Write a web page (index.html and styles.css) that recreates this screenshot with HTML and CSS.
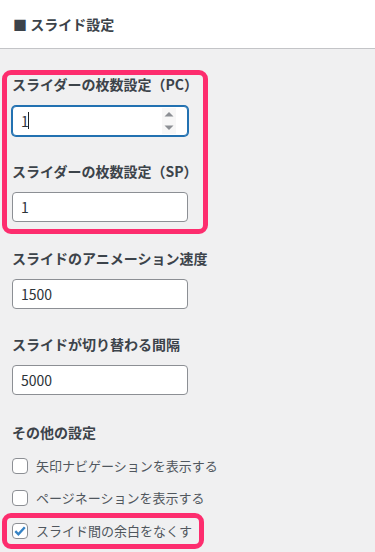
FILE: index.html
```html
<!DOCTYPE html>
<html lang="ja">
<head>
<meta charset="utf-8">
<title>スライド設定</title>
<link rel="stylesheet" href="styles.css">
</head>
<body>
<header class="panel-header">
  <h2 class="panel-title">■ スライド設定</h2>
</header>
<main class="panel-body">
  <div class="highlight highlight-fields">
    <div class="field field-first">
      <label class="field-label">スライダーの枚数設定（PC）</label>
      <div class="input-wrap">
        <input class="text-input is-focused" type="text" value="1" readonly>
        <span class="caret"></span>
        <svg class="spinner" width="14" height="26" viewBox="0 0 14 26" aria-hidden="true">
          <rect x="0" y="0" width="14" height="26" fill="#f7f7f7"/>
          <polygon points="2.5,8.5 7,4 11.5,8.5" fill="#8c8f94"/>
          <polygon points="2.5,17.5 7,22 11.5,17.5" fill="#8c8f94"/>
        </svg>
      </div>
    </div>
    <div class="field">
      <label class="field-label">スライダーの枚数設定（SP）</label>
      <input class="text-input" type="text" value="1" readonly>
    </div>
  </div>

  <div class="field field-after-box">
    <label class="field-label">スライドのアニメーション速度</label>
    <input class="text-input" type="text" value="1500" readonly>
  </div>
  <div class="field">
    <label class="field-label">スライドが切り替わる間隔</label>
    <input class="text-input" type="text" value="5000" readonly>
  </div>

  <div class="field field-other">
    <div class="field-label">その他の設定</div>
  </div>
  <div class="check-list">
    <label class="check-row">
      <span class="checkbox"></span>
      <span class="check-text">矢印ナビゲーションを表示する</span>
    </label>
    <label class="check-row">
      <span class="checkbox"></span>
      <span class="check-text">ページネーションを表示する</span>
    </label>
    <div class="highlight highlight-check">
      <label class="check-row check-row-boxed">
        <span class="checkbox">
          <svg width="14" height="14" viewBox="0 0 14 14" aria-hidden="true">
            <path d="M2.3 7.2 L5.4 10.3 L11.8 3.2" fill="none" stroke="#3582c4" stroke-width="2.4" stroke-linejoin="miter"/>
          </svg>
        </span>
        <span class="check-text">スライド間の余白をなくす</span>
      </label>
    </div>
  </div>
</main>
</body>
</html>
```

FILE: styles.css
```css
* {
  box-sizing: border-box;
}

html, body {
  margin: 0;
  padding: 0;
}

body {
  background: #f0f0f1;
  font-family: "Noto Sans CJK JP", "Noto Sans", sans-serif;
  color: #3c434a;
  width: 375px;
  height: 552px;
  overflow: hidden;
}

.panel-header {
  background: #ffffff;
  height: 49px;
  border-bottom: 1px solid #c3c4c7;
  display: flex;
  align-items: center;
  padding: 0 0 1px 13px;
}

.panel-title {
  margin: 0;
  font-size: 14px;
  font-weight: 700;
  line-height: 18px;
  color: #3c434a;
}

.panel-body {
  padding: 0 0 0 2px;
}

.highlight {
  border: 5px solid #fd2d6e;
  border-radius: 9px;
  padding: 0 5px;
}

.highlight-fields {
  width: 206px;
  margin-top: 21px;
  padding-bottom: 7px;
}

.field {
  display: flex;
  flex-direction: column;
  align-items: flex-start;
  margin-top: 26px;
}

.field-first {
  margin-top: 0;
}

.field-after-box {
  margin-top: 15px;
  padding-left: 10px;
}

.highlight-fields + .field-after-box ~ .field {
  padding-left: 10px;
}

.field-other {
  margin-top: 28px;
}

.field-label {
  font-size: 14px;
  font-weight: 700;
  line-height: 18px;
  color: #3c434a;
  margin-bottom: 12px;
  white-space: nowrap;
}

.field-first .field-label {
  margin-bottom: 13px;
}

.field-other .field-label {
  margin-bottom: 0;
}

.input-wrap {
  position: relative;
  width: 176px;
  height: 30px;
}

.text-input {
  display: block;
  width: 176px;
  height: 30px;
  margin: 0;
  padding: 0 8px;
  border: 1px solid #8c8f94;
  border-radius: 4px;
  background: #ffffff;
  font-family: "Noto Sans CJK JP", "Noto Sans", sans-serif;
  font-size: 14px;
  color: #2c3338;
  outline: none;
}

.text-input.is-focused {
  border-color: #2271b1;
  box-shadow: 0 0 0 1px #2271b1;
}

.caret {
  position: absolute;
  left: 16px;
  top: 6px;
  width: 1px;
  height: 17px;
  background: #1d2327;
}

.spinner {
  position: absolute;
  right: 12px;
  top: 2px;
}

.check-list {
  display: flex;
  flex-direction: column;
  gap: 1px;
  margin-top: 9px;
}

.check-row {
  display: flex;
  align-items: center;
  gap: 8px;
  height: 31px;
  padding-left: 10px;
}

.check-row-boxed {
  height: 26px;
  padding-left: 0;
}

.highlight-check {
  width: 202px;
  margin-top: -1px;
}

.checkbox {
  width: 16px;
  height: 16px;
  flex: none;
  border: 1px solid #8c8f94;
  border-radius: 4px;
  background: #ffffff;
  display: flex;
  align-items: center;
  justify-content: center;
}

.check-text {
  font-size: 13px;
  line-height: 18px;
  color: #50575e;
  white-space: nowrap;
}
```
